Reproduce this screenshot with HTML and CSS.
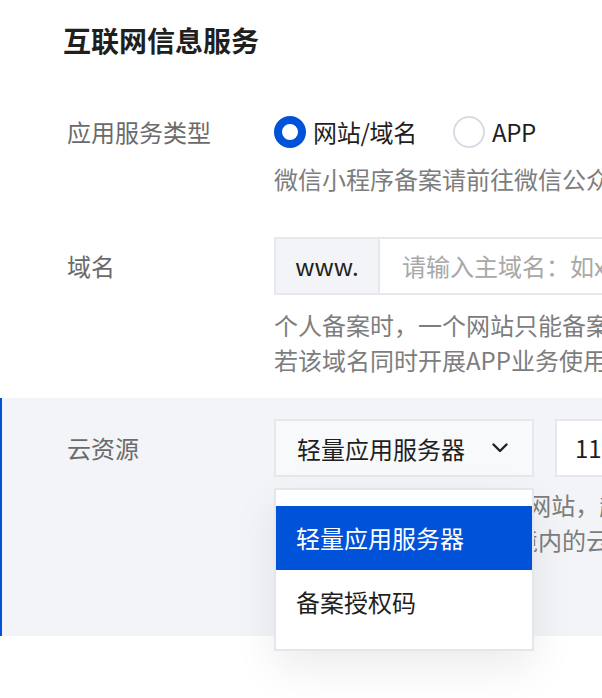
FILE: index.html
```html
<!DOCTYPE html>
<html lang="zh-CN">
<head>
<meta charset="utf-8">
<title>互联网信息服务</title>
<link rel="stylesheet" href="styles.css">
</head>
<body>
<div class="page">
  <h1 class="title">互联网信息服务</h1>

  <div class="row row-type">
    <div class="label">应用服务类型</div>
    <div class="control">
      <div class="radios">
        <label class="radio checked"><span class="dot"></span><span class="radio-text">网站/域名</span></label>
        <label class="radio"><span class="dot"></span><span class="radio-text">APP</span></label>
      </div>
      <div class="hint hint-first">微信小程序备案请前往微信公众平台进行备案操作</div>
    </div>
  </div>

  <div class="row row-domain">
    <div class="label label-box">域名</div>
    <div class="control">
      <div class="input-group">
        <span class="addon">www.</span>
        <span class="input-field placeholder">请输入主域名：如xxx.com</span>
      </div>
      <div class="hints">
        <div class="hint">个人备案时，一个网站只能备案一个域名，请谨慎填写</div>
        <div class="hint">若该域名同时开展APP业务使用，请选择APP备案类型</div>
      </div>
    </div>
  </div>

  <div class="row row-cloud">
    <div class="label label-box">云资源</div>
    <div class="control">
      <div class="controls-line">
        <div class="select-wrap">
          <div class="select">
            <span class="select-value">轻量应用服务器</span>
            <svg class="chevron" width="16" height="10" viewBox="0 0 16 10"><path d="M1.5 1.5 L8 8 L14.5 1.5" fill="none" stroke="#222" stroke-width="2.4" stroke-linecap="round" stroke-linejoin="round"/></svg>
          </div>
          <div class="dropdown">
            <div class="option active">轻量应用服务器</div>
            <div class="option">备案授权码</div>
          </div>
        </div>
        <div class="input-field ip">111.230.45.18</div>
      </div>
      <div class="hints">
        <div class="hint">每台云服务器可关联5个网站，超出请更换资源</div>
        <div class="hint">支持备案位于中国大陆境内的云资源</div>
      </div>
    </div>
  </div>
</div>
</body>
</html>
```

FILE: styles.css
```css
html, body {
  margin: 0;
  padding: 0;
  overflow: hidden;
  background: #ffffff;
}

body {
  font-family: "Noto Sans CJK SC", "Noto Sans", sans-serif;
  color: #222;
  width: 602px;
  height: 698px;
}

.page {
  padding-top: 20px;
}

.title {
  margin: 0 0 0 63px;
  font-size: 28px;
  line-height: 40px;
  font-weight: 700;
  color: #1f1f1f;
}

.row {
  display: grid;
  grid-template-columns: 207px 1fr;
  padding-left: 67px;
  white-space: nowrap;
}

.label {
  font-size: 24px;
  line-height: 36px;
  color: #6b6b6b;
}

.label-box {
  line-height: 58px;
}

.control {
  min-width: 0;
}

.row-type {
  margin-top: 54px;
}

.radios {
  display: flex;
  align-items: center;
  gap: 36px;
  height: 36px;
}

.radio {
  display: flex;
  align-items: center;
  gap: 7px;
  font-size: 24px;
  line-height: 36px;
  color: #1f1f1f;
}

.radio-text {
  letter-spacing: -0.3px;
}

.dot {
  box-sizing: border-box;
  width: 32px;
  height: 32px;
  border-radius: 50%;
  border: 2px solid #d8dbe3;
  background: #fff;
}

.radio.checked .dot {
  border: 8px solid #0052d9;
}

.hint {
  font-size: 24px;
  line-height: 35px;
  color: #7d7d7d;
}

.hint-first {
  margin-top: 11px;
  line-height: 36px;
}

.hints {
  margin-top: 12px;
}

.row-domain {
  margin-top: 40px;
}

.input-group {
  display: flex;
  height: 58px;
  box-sizing: border-box;
  border: 2px solid #e6e8ee;
  width: 600px;
  background: #fff;
}

.addon {
  box-sizing: border-box;
  width: 104px;
  flex: none;
  background: #f3f4f7;
  border-right: 2px solid #e6e8ee;
  font-size: 24px;
  line-height: 54px;
  text-align: center;
  color: #1f1f1f;
}

.input-field {
  font-size: 24px;
  line-height: 54px;
  padding-left: 22px;
}

.placeholder {
  color: #a8a8a8;
}

.row-cloud {
  margin-top: 21px;
  background: #f3f4f7;
  border-left: 2px solid #0052d9;
  padding-left: 65px;
  padding-top: 21px;
  height: 238px;
  box-sizing: border-box;
}

.controls-line {
  display: flex;
  gap: 21px;
}

.select-wrap {
  position: relative;
  flex: none;
}

.select {
  box-sizing: border-box;
  width: 260px;
  height: 58px;
  border: 2px solid #e6e8ee;
  background: #f8f9fb;
  display: flex;
  align-items: center;
  justify-content: space-between;
  padding: 0 24px 0 21px;
  font-size: 24px;
  color: #1f1f1f;
}

.chevron {
  display: block;
}

.input-field.ip {
  box-sizing: border-box;
  height: 58px;
  width: 300px;
  flex: none;
  border: 2px solid #e6e8ee;
  background: #fff;
  padding-left: 18px;
  color: #1f1f1f;
}

.row-cloud .hints {
  margin-top: 10px;
}

.dropdown {
  position: absolute;
  top: 69px;
  left: 0;
  box-sizing: border-box;
  width: 260px;
  height: 163px;
  background: #fff;
  border: 2px solid #e3e6ec;
  padding-top: 16px;
  box-shadow: 0 16px 40px rgba(0, 0, 0, 0.08);
  z-index: 10;
}

.option {
  height: 64px;
  line-height: 64px;
  padding-left: 20px;
  font-size: 24px;
  color: #1f1f1f;
}

.option.active {
  background: #0052d9;
  color: #fff;
}
```
